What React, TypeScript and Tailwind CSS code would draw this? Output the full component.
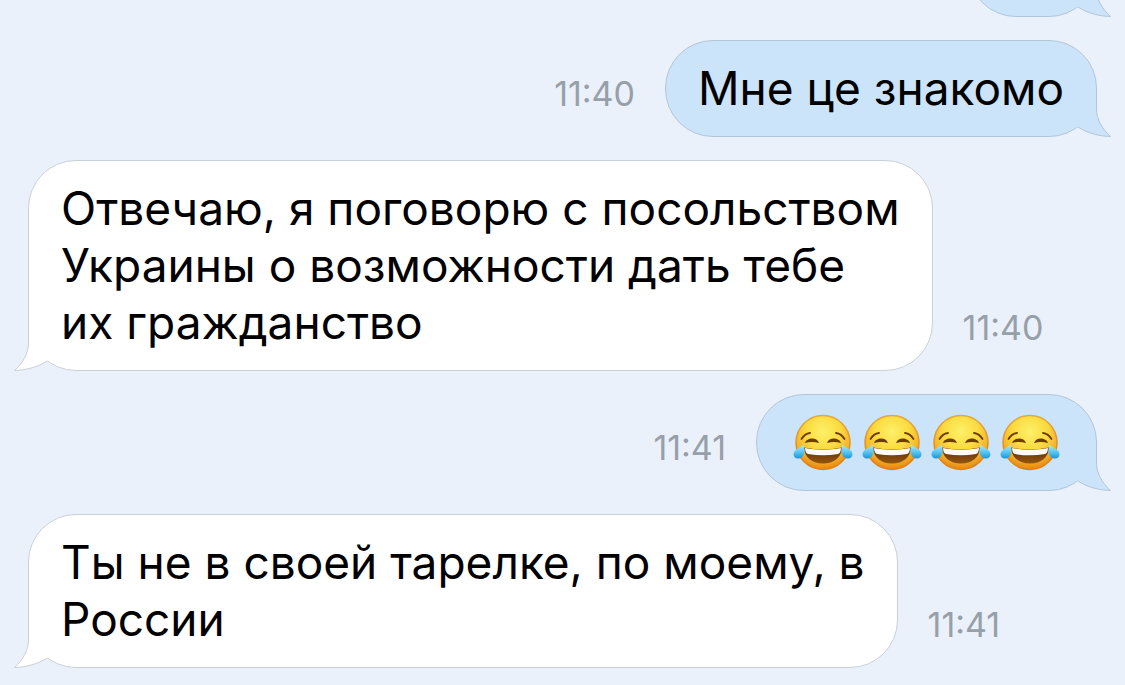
import { useId } from "react";

interface Message {
  id: number;
  text?: string;
  laughs?: number;
  time: string;
  outgoing: boolean;
}

const messages: Message[] = [
  { id: 1, text: "Мне це знакомо", time: "11:40", outgoing: true },
  {
    id: 2,
    text: "Отвечаю, я поговорю с посольством\nУкраины о возможности дать тебе\nих гражданство",
    time: "11:40",
    outgoing: false,
  },
  { id: 3, laughs: 4, time: "11:41", outgoing: true },
  {
    id: 4,
    text: "Ты не в своей тарелке, по моему, в\nРоссии",
    time: "11:41",
    outgoing: false,
  },
];

function JoyEmoji() {
  const id = useId();
  const face = `${id}-face`;
  const rim = `${id}-rim`;
  const tear = `${id}-tear`;
  const mouth = `${id}-mouth`;

  return (
    <svg className="h-[57px] w-[60px]" viewBox="0 0 60 57" role="img" aria-label="😂">
      <defs>
        <radialGradient id={face} cx="0.5" cy="0.3" r="0.7">
          <stop offset="0" stopColor="#fdf06a" />
          <stop offset="0.45" stopColor="#fbdc40" />
          <stop offset="0.75" stopColor="#f5b52a" />
          <stop offset="1" stopColor="#e68512" />
        </radialGradient>
        <linearGradient id={rim} x1="0" y1="0" x2="0" y2="1">
          <stop offset="0" stopColor="#e3a93c" />
          <stop offset="1" stopColor="#e07f12" />
        </linearGradient>
        <linearGradient id={tear} x1="0" y1="0" x2="0" y2="1">
          <stop offset="0" stopColor="#b5ebfa" />
          <stop offset="0.6" stopColor="#4fc0ee" />
          <stop offset="1" stopColor="#1b93dc" />
        </linearGradient>
        <linearGradient id={mouth} x1="0" y1="0" x2="0" y2="1">
          <stop offset="0" stopColor="#5c2a08" />
          <stop offset="1" stopColor="#94560f" />
        </linearGradient>
      </defs>
      <circle
        cx="30"
        cy="28.5"
        r="27"
        fill={`url(#${face})`}
        stroke={`url(#${rim})`}
        strokeWidth="1.5"
      />
      <g fill="none" stroke="#6b3c0a" strokeLinecap="round">
        <path d="M8.500 25C10.500 21.500 13.500 19.500 17 19" strokeWidth="1.8" />
        <path d="M51.500 25C49.500 21.500 46.500 19.500 43 19" strokeWidth="1.8" />
      </g>
      <g fill="#6b3c0a">
        <path d="M12 29C13.500 23.500 24 22.500 26 29C21.500 27.500 16.500 27.500 12 29Z" />
        <path d="M34 29C36 22.500 46.500 23.500 48 29C43.500 27.500 38.500 27.500 34 29Z" />
      </g>
      <path
        d="M11 33.500C23 36 37 36 49 33.500C48.500 43.500 41 49.500 30 49.500S11.500 43.500 11 33.500Z"
        fill={`url(#${mouth})`}
      />
      <path
        d="M12 34C24 36.200 36 36.200 48 34C47.800 37.500 47 39.500 45 40C35 41.800 25 41.800 15 40C13 39.500 12.200 37.500 12 34Z"
        fill="#fffbf2"
      />
      <path
        d="M10.500 30.500C12.500 36 12 44 5.500 44.500C.5 44.800 -1 40 2.200 36.500C4.800 34 8.500 33 10.500 30.500Z"
        fill={`url(#${tear})`}
      />
      <path
        d="M49.500 30.500C47.500 36 48 44 54.500 44.500C59.500 44.800 61 40 57.800 36.500C55.200 34 51.500 33 49.500 30.500Z"
        fill={`url(#${tear})`}
      />
    </svg>
  );
}

function Tail({ outgoing }: { outgoing: boolean }) {
  return (
    <svg
      className={`absolute -bottom-px h-[50px] w-[48px] ${
        outgoing
          ? "-right-[15px] -scale-x-100 fill-[#cce4f9] stroke-[#b3c6d9]"
          : "-left-[15px] fill-white stroke-[#c9d0d8]"
      }`}
      viewBox="0 0 48 50"
      aria-hidden="true"
    >
      <path
        stroke="none"
        d="M14.500 0V22C14.500 32 9 42 .5 49.500C13 49 24 46 33 40L46 30L32 0Z"
      />
      <path
        fill="none"
        d="M14.500 0V22C14.500 32 9 42 .5 49.500C13 49 24 46 33 40"
      />
    </svg>
  );
}

function Bubble({ message }: { message: Message }) {
  const { text, laughs, outgoing } = message;

  return (
    <div
      className={`relative rounded-[48px] border px-8 py-[19px] text-[46px] leading-[57px] whitespace-pre-line text-black ${
        outgoing ? "border-[#b3c6d9] bg-[#cce4f9]" : "border-[#c9d0d8] bg-white"
      }`}
    >
      {text && <p>{text}</p>}
      {laughs && (
        <div className="flex gap-[9px] px-1">
          {Array.from({ length: laughs }, (_, i) => (
            <JoyEmoji key={i} />
          ))}
        </div>
      )}
      <Tail outgoing={outgoing} />
    </div>
  );
}

export default function App() {
  return (
    <main className="flow-root min-h-screen overflow-hidden bg-[#eaf1fb] px-7 pb-4 font-['Inter','Liberation_Sans',sans-serif]">
      {/* previous message, scrolled almost out of view */}
      <div className="-mt-20 flex justify-end">
        <div className="relative h-[97px] w-[129px] rounded-[48px] border border-[#b3c6d9] bg-[#cce4f9]">
          <Tail outgoing />
        </div>
      </div>
      <ul>
        {messages.map((message) => (
          <li
            key={message.id}
            className={`mt-[23px] flex items-end gap-[30px] ${
              message.outgoing ? "flex-row-reverse" : ""
            }`}
          >
            <Bubble message={message} />
            <time className="pb-[23px] text-[34px] leading-[40px] text-[#979fa9]">
              {message.time}
            </time>
          </li>
        ))}
      </ul>
    </main>
  );
}
